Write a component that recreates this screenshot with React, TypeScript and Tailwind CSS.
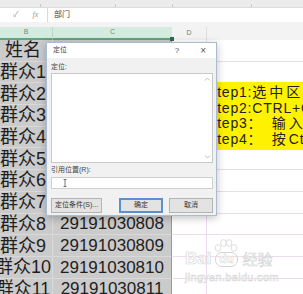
import React from 'react';

const rows = [
  { name: '姓名', num: '' },
  { name: '群众1', num: '' },
  { name: '群众2', num: '' },
  { name: '群众3', num: '' },
  { name: '群众4', num: '' },
  { name: '群众5', num: '' },
  { name: '群众6', num: '' },
  { name: '群众7', num: '' },
  { name: '群众8', num: '29191030808' },
  { name: '群众9', num: '29191030809' },
  { name: '群众10', num: '29191030810' },
  { name: '群众11', num: '29191030811' },
];

// step lines: latin part + cjk part (cjk is spaced wider)
const steps = [
  { a: 'Step1:', b: '选中区域' },
  { a: 'Step2:CTRL+G', b: '' },
  { a: 'Step3：  ', b: '输入' },
  { a: 'Step4：  ', b: '按', c: 'Ctrl' },
];

const Chevron: React.FC<{ down?: boolean }> = ({ down }) => (
  <svg width="7" height="5" viewBox="0 0 7 5" className="block">
    <path d={down ? 'M1 1.5 L3.5 4 L6 1.5' : 'M1 3.5 L3.5 1 L6 3.5'} fill="none" stroke="#b5b5b5" strokeWidth="0.9" />
  </svg>
);

const Dialog: React.FC = () => (
  <div className="absolute left-[46px] top-[42px] z-20 flex h-[174px] w-[171px] flex-col border border-[#a9bcd3] bg-[#f1f1f1] shadow-[0_2px_8px_rgba(0,0,0,0.25)]">
    <div className="flex h-[15px] items-center bg-white pl-[6px] pr-[10px] text-[7px] text-[#444]">
      <span className="flex-1">定位</span>
      <span className="text-[8px] text-[#555]">?</span>
      <span className="ml-[21px] text-[10px] leading-none text-[#555]">×</span>
    </div>
    <div className="flex flex-col px-[4px]">
      <div className="mt-[4px] h-[10px] text-[7px] leading-[10px] text-[#444]">定位:</div>
      <div className="mt-[1px] flex h-[90px] w-[162px] justify-end border border-[#c9c9c9] bg-white">
        <div className="flex w-[9px] flex-col items-center justify-between py-[3px]">
          <Chevron />
          <Chevron down />
        </div>
      </div>
      <div className="mt-[2px] h-[10px] text-[7px] leading-[10px] text-[#444]">引用位置(R):</div>
      <div className="mt-[2px] flex h-[12px] w-[162px] items-center border border-[#cfcfcf] bg-white pl-[11px]">
        <svg width="4" height="8" viewBox="0 0 4 8">
          <path d="M0.5 0.5 H3.5 M2 0.5 V7.5 M0.5 7.5 H3.5" fill="none" stroke="#555" strokeWidth="0.8" />
        </svg>
      </div>
      <div className="mt-[9px] flex h-[15px] w-[162px] text-[7px] text-[#333]">
        <div className="flex w-[51px] items-center justify-center border border-[#b4b4b4] bg-[#e3e3e3]">定位条件(S)...</div>
        <div className="ml-auto flex gap-[6px]">
          <div className="flex w-[44px] items-center justify-center border-2 border-[#5a8fd0] bg-[#e3e3e3]">确定</div>
          <div className="flex w-[44px] items-center justify-center border border-[#b4b4b4] bg-[#e3e3e3]">取消</div>
        </div>
      </div>
    </div>
  </div>
);

const Watermark: React.FC = () => (
  <div className="absolute left-[185px] top-[239px] z-10 flex flex-col items-start text-white">
    <div className="flex items-end">
      <span className="text-[17px] font-bold leading-none [-webkit-text-stroke:0.6px_#d4d4d4]">Bai</span>
      <div className="ml-[2px] flex flex-col items-center">
        <svg width="26" height="14" viewBox="0 0 26 14" className="mb-[-1px]">
          <ellipse cx="5" cy="9" rx="2.8" ry="3.4" fill="#fff" stroke="#d4d4d4" strokeWidth="0.8" />
          <ellipse cx="10.5" cy="4" rx="2.8" ry="3.4" fill="#fff" stroke="#d4d4d4" strokeWidth="0.8" />
          <ellipse cx="16" cy="4" rx="2.8" ry="3.4" fill="#fff" stroke="#d4d4d4" strokeWidth="0.8" />
          <ellipse cx="21" cy="9" rx="2.8" ry="3.4" fill="#fff" stroke="#d4d4d4" strokeWidth="0.8" />
        </svg>
        <span className="rounded-[7px] border border-[#d4d4d4] px-[3px] text-[12px] font-bold leading-[13px] [-webkit-text-stroke:0.5px_#d4d4d4]">du</span>
      </div>
      <span className="ml-[3px] text-[15px] leading-none [-webkit-text-stroke:0.6px_#d4d4d4]">经验</span>
    </div>
    <span className="mt-[5px] text-[11px] leading-none tracking-[0.3px] [-webkit-text-stroke:0.5px_#d4d4d4]">jingyan.baidu.com</span>
  </div>
);

const App: React.FC = () => {
  return (
    <div className="relative h-[294px] w-[303px] overflow-hidden bg-[#f3f3f3] font-['Liberation_Sans','Noto_Sans_CJK_SC',sans-serif]">
      {/* ribbon edge */}
      <div className="flex h-[8px] items-end border-b border-[#dcdcdc] bg-[#ececec]">
        <div className="ml-[40px] h-[3px] w-[1px] bg-[#c8c8c8]" />
        <div className="ml-[74px] h-[3px] w-[1px] bg-[#c8c8c8]" />
        <div className="ml-[56px] h-[3px] w-[1px] bg-[#c8c8c8]" />
        <div className="ml-[78px] h-[3px] w-[1px] bg-[#c8c8c8]" />
      </div>

      {/* formula bar */}
      <div className="flex h-[14px] bg-white">
        <div className="flex w-[48px] items-center border-r border-[#dadada] text-[#9a9a9a]">
          <span className="ml-[13px] text-[8px]">✓</span>
          <span className="ml-[14px] font-['Liberation_Serif',serif] text-[8px] italic">fx</span>
        </div>
        <div className="flex items-center pl-[6px] text-[8px] text-[#444]">部门</div>
      </div>

      <div className="h-[5px] bg-[#f3f3f3]" />

      {/* column headers */}
      <div className="flex h-[13px] text-[7px] text-[#6c8f7c]">
        <div className="flex w-[53px] items-center justify-center border-r border-[#bcd8c8] border-b-2 border-b-[#5fa57e] bg-[#d4ece0]">B</div>
        <div className="relative flex w-[119px] items-center justify-center border-b-2 border-b-[#5fa57e] bg-[#d4ece0]">
          C
          <div className="absolute -bottom-[3px] -right-[2px] h-[4px] w-[4px] bg-[#2f6b4a]" />
        </div>
        <div className="flex w-[35px] items-center justify-center border-r border-[#dcdcdc] bg-[#f3f3f3] text-[#777]">D</div>
        <div className="flex-1 bg-[#f3f3f3]" />
      </div>

      {/* grid rows */}
      <div className="flex flex-col">
        {rows.map((r, i) => (
          <div key={i} className="flex h-[21.7px]">
            <div className="flex w-[53px] items-center border-b border-r border-[#d9d9d9] bg-[#cbcbcb]">
              <div className="flex w-[46px] justify-center whitespace-nowrap text-[18px] leading-none text-[#1e1e1e]">{r.name}</div>
            </div>
            <div className="flex w-[119px] items-center justify-center border-b border-r border-b-[#d9d9d9] border-r-[#6fae8b] bg-[#cbcbcb] text-[17px] leading-none text-[#1e1e1e]">
              {r.num}
            </div>
            <div className="w-[35px] border-b border-r border-[#ecdcec] bg-white" />
            <div className="flex-1 border-b border-[#ecdcec] bg-white" />
          </div>
        ))}
      </div>

      {/* yellow text box */}
      <div className="absolute left-[170px] top-[82px] z-10 flex h-[68px] w-[160px] flex-col justify-center bg-[#fff200] pl-[37px] text-[14px] leading-[15.5px] text-[#222]">
        {steps.map((s) => (
          <div key={s.a} className="whitespace-pre tracking-[0.8px]">
            {s.a}
            <span className="tracking-[3px]">{s.b}</span>
            {s.c}
          </div>
        ))}
      </div>

      <Watermark />
      <Dialog />
    </div>
  );
};

export default App;
